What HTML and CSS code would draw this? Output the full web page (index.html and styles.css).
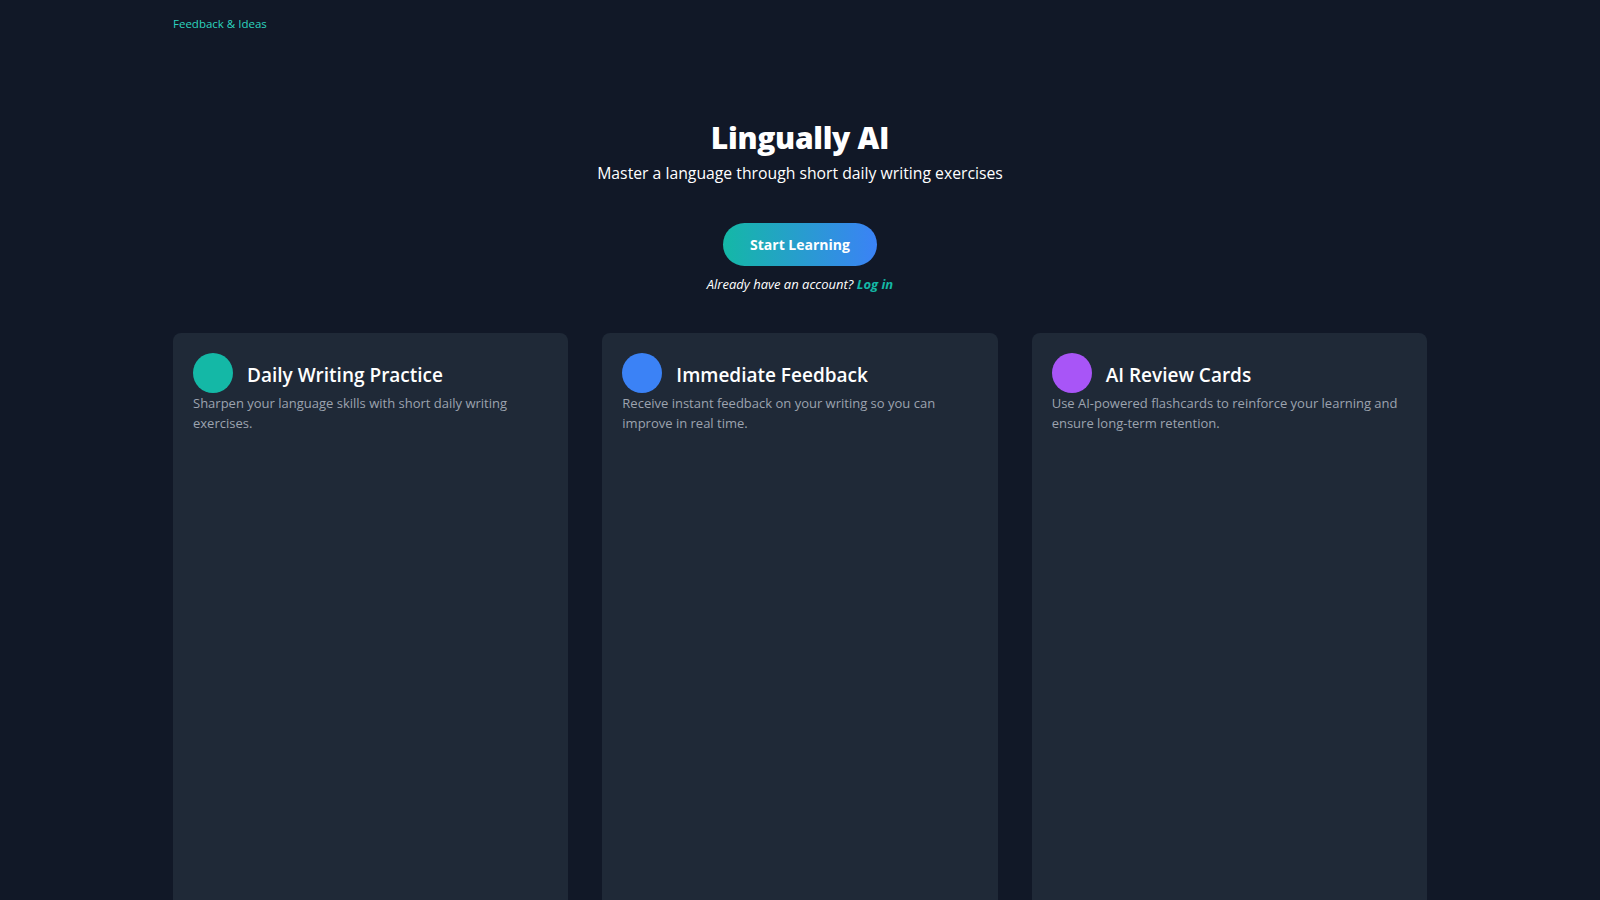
FILE: index.html
```html
<!DOCTYPE html>
<html lang="en">
<head>
<meta charset="utf-8">
<title>Lingually AI</title>
<link rel="stylesheet" href="styles.css">
</head>
<body>
<div class="page">
  <header class="topbar">
    <a class="feedback-link" href="#">Feedback &amp; Ideas</a>
  </header>
  <section class="hero">
    <h1 class="hero-title">Lingually AI</h1>
    <p class="hero-subtitle">Master a language through short daily writing exercises</p>
    <a class="cta" href="#">Start Learning</a>
    <p class="login-line">Already have an account? <a class="login-link" href="#">Log in</a></p>
  </section>
  <section class="features">
    <article class="card">
      <div class="card-head">
        <span class="dot dot-teal"></span>
        <h2 class="card-title">Daily Writing Practice</h2>
      </div>
      <p class="card-text">Sharpen your language skills with short daily writing exercises.</p>
    </article>
    <article class="card">
      <div class="card-head">
        <span class="dot dot-blue"></span>
        <h2 class="card-title">Immediate Feedback</h2>
      </div>
      <p class="card-text">Receive instant feedback on your writing so you can improve in real time.</p>
    </article>
    <article class="card">
      <div class="card-head">
        <span class="dot dot-purple"></span>
        <h2 class="card-title">AI Review Cards</h2>
      </div>
      <p class="card-text">Use AI-powered flashcards to reinforce your learning and ensure long-term retention.</p>
    </article>
  </section>
</div>
</body>
</html>
```

FILE: styles.css
```css
* { box-sizing: border-box; }
html, body { margin: 0; padding: 0; }
body {
  background: #111827;
  color: #ffffff;
  font-family: "Open Sans", "Noto Sans", sans-serif;
  overflow: hidden;
}
.page {
  width: 1254px;
  margin: 0 auto;
}
.topbar {
  display: flex;
  padding-top: 16px;
  height: 40px;
}
.feedback-link {
  color: #2dd4bf;
  font-size: 11.5px;
  text-decoration: none;
}
.hero {
  display: flex;
  flex-direction: column;
  align-items: center;
  padding-top: 80px;
}
.hero-title {
  margin: 0;
  font-size: 30px;
  font-weight: 800;
  line-height: 36px;
  letter-spacing: -0.3px;
}
.hero-subtitle {
  margin: 5px 0 0;
  font-size: 15.75px;
  line-height: 24px;
}
.cta {
  margin-top: 38px;
  display: flex;
  align-items: center;
  justify-content: center;
  width: 154px;
  height: 43px;
  border-radius: 999px;
  background: linear-gradient(90deg, #14b8a6, #3b82f6);
  color: #fff;
  font-weight: 700;
  font-size: 14px;
  text-decoration: none;
}
.login-line {
  margin: 8px 0 0;
  font-size: 13px;
  line-height: 20px;
  font-style: italic;
}
.login-link {
  color: #14b8a6;
  font-weight: 700;
  text-decoration: none;
}
.features {
  display: grid;
  grid-template-columns: repeat(3, 1fr);
  gap: 34px;
  margin-top: 39px;
}
.card {
  background: #1f2937;
  border-radius: 8px;
  padding: 20px;
  min-height: 620px;
}
.card-head {
  display: flex;
  align-items: center;
  gap: 14px;
}
.dot {
  width: 40px;
  height: 40px;
  border-radius: 50%;
  flex: none;
}
.dot-teal { background: #14b8a6; }
.dot-blue { background: #3b82f6; }
.dot-purple { background: #a855f7; }
.card-title {
  margin: 0;
  font-size: 19px;
  font-weight: 600;
  line-height: 28px;
  padding-top: 4px;
}
.card-text {
  margin: 0;
  color: #9ca3af;
  font-size: 13px;
  line-height: 20px;
}
```
